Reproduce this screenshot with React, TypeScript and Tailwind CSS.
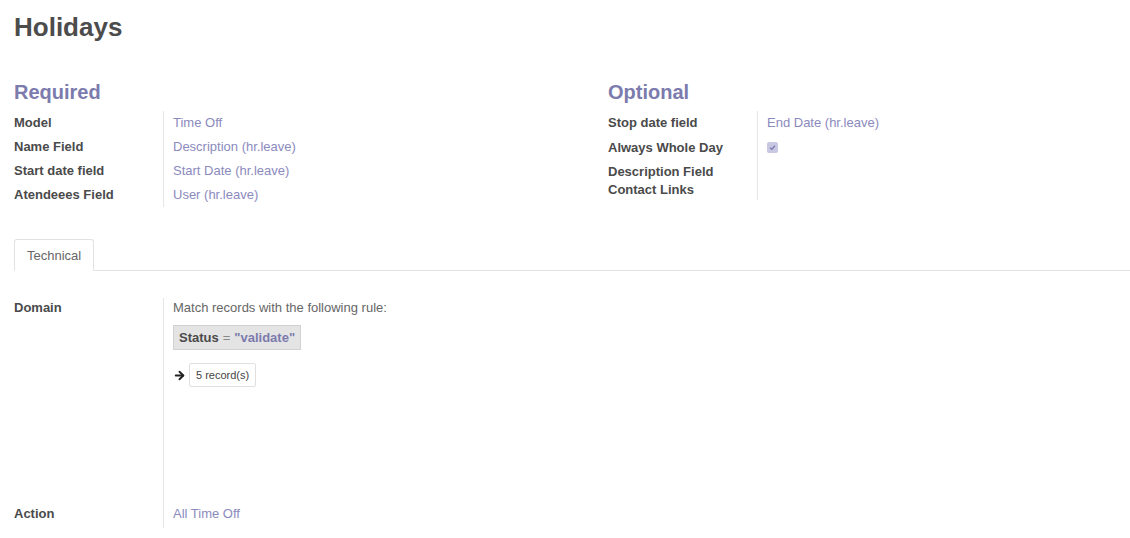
import React from 'react';
import { ArrowRight } from 'lucide-react';

type Field = { label: string; value?: React.ReactNode; h: string };

const requiredFields: Field[] = [
  { label: 'Model', value: 'Time Off', h: 'h-[24px] leading-[24px]' },
  { label: 'Name Field', value: 'Description (hr.leave)', h: 'h-[24px] leading-[24px]' },
  { label: 'Start date field', value: 'Start Date (hr.leave)', h: 'h-[24px] leading-[24px]' },
  { label: 'Atendeees Field', value: 'User (hr.leave)', h: 'h-[24px] leading-[24px]' },
];

const CheckBox = () => (
  <span className="mt-[7px] flex h-[11px] w-[11px] items-center justify-center rounded-[2px] bg-[#c9c8e2]">
    <svg viewBox="0 0 10 10" className="h-[7px] w-[7px]" fill="none" stroke="#7c7bad" strokeWidth="1.8">
      <path d="M1.5 5.2 L4 7.5 L8.5 2.5" />
    </svg>
  </span>
);

const optionalFields: Field[] = [
  { label: 'Stop date field', value: 'End Date (hr.leave)', h: 'h-[24px] leading-[24px]' },
  { label: 'Always Whole Day', value: <CheckBox />, h: 'h-[25px] leading-[25px]' },
  { label: 'Description Field', h: 'h-[20px] leading-[23px]' },
  { label: 'Contact Links', h: 'h-[20px] leading-[20px]' },
];

function FieldGroup({ title, fields }: { title: string; fields: Field[] }) {
  return (
    <div>
      <h2 className="h-[28px] text-[20px] font-bold leading-[24px] text-[#7c7bad]">{title}</h2>
      <div className="mt-[3px] grid grid-cols-[149px_1fr]">
        {fields.map(f => (
          <React.Fragment key={f.label}>
            <div className={`${f.h} font-bold text-[#4a4a4a]`}>{f.label}</div>
            <div className={`${f.h} border-l border-[#e6e6e6] pl-[9px] text-[#8b8abd]`}>{f.value}</div>
          </React.Fragment>
        ))}
      </div>
    </div>
  );
}

export default function App() {
  return (
    <div className="min-h-screen bg-white font-['Liberation_Sans',Arial,sans-serif] text-[13px]">
      <div className="pl-[14px] pt-[12px]">
        <h1 className="h-[30px] text-[26px] font-bold leading-[30px] text-[#4c4c4c]">Holidays</h1>

        <div className="mt-[38px] grid grid-cols-[594px_1fr]">
          <FieldGroup title="Required" fields={requiredFields} />
          <FieldGroup title="Optional" fields={optionalFields} />
        </div>

        {/* notebook */}
        <div className="mt-[32px] flex border-b border-[#e2e2e2]">
          <div className="-mb-px h-[32px] rounded-t-[3px] border border-b-white border-[#e2e2e2] bg-white px-[12px] leading-[31px] text-[#666]">
            Technical
          </div>
        </div>

        <div className="mt-[27px] grid grid-cols-[149px_1fr]">
          <div className="h-[206px] font-bold leading-[20px] text-[#4a4a4a]">Domain</div>
          <div className="h-[206px] border-l border-[#e6e6e6] pl-[9px]">
            <div className="leading-[20px] text-[#666]">Match records with the following rule:</div>
            <div className="mt-[7px] inline-flex h-[25px] items-center gap-[4px] border border-[#d2d2d2] bg-[#e4e4e4] px-[5px]">
              <span className="font-bold text-[#4a4a4a]">Status</span>
              <span className="text-[#888]">=</span>
              <span className="font-bold text-[#7c7bad]">"validate"</span>
            </div>
            <div className="mt-[13px] flex items-center gap-[3px]">
              <ArrowRight size={13} strokeWidth={3.5} className="text-[#222]" />
              <span className="h-[24px] rounded-[2px] border border-[#e0e0e0] bg-white px-[6px] text-[11px] leading-[22px] text-[#444]">
                5 record(s)
              </span>
            </div>
          </div>
          <div className="h-[24px] font-bold leading-[20px] text-[#4a4a4a]">Action</div>
          <div className="h-[24px] border-l border-[#e6e6e6] pl-[9px] leading-[20px] text-[#8b8abd]">All Time Off</div>
        </div>
      </div>
    </div>
  );
}
